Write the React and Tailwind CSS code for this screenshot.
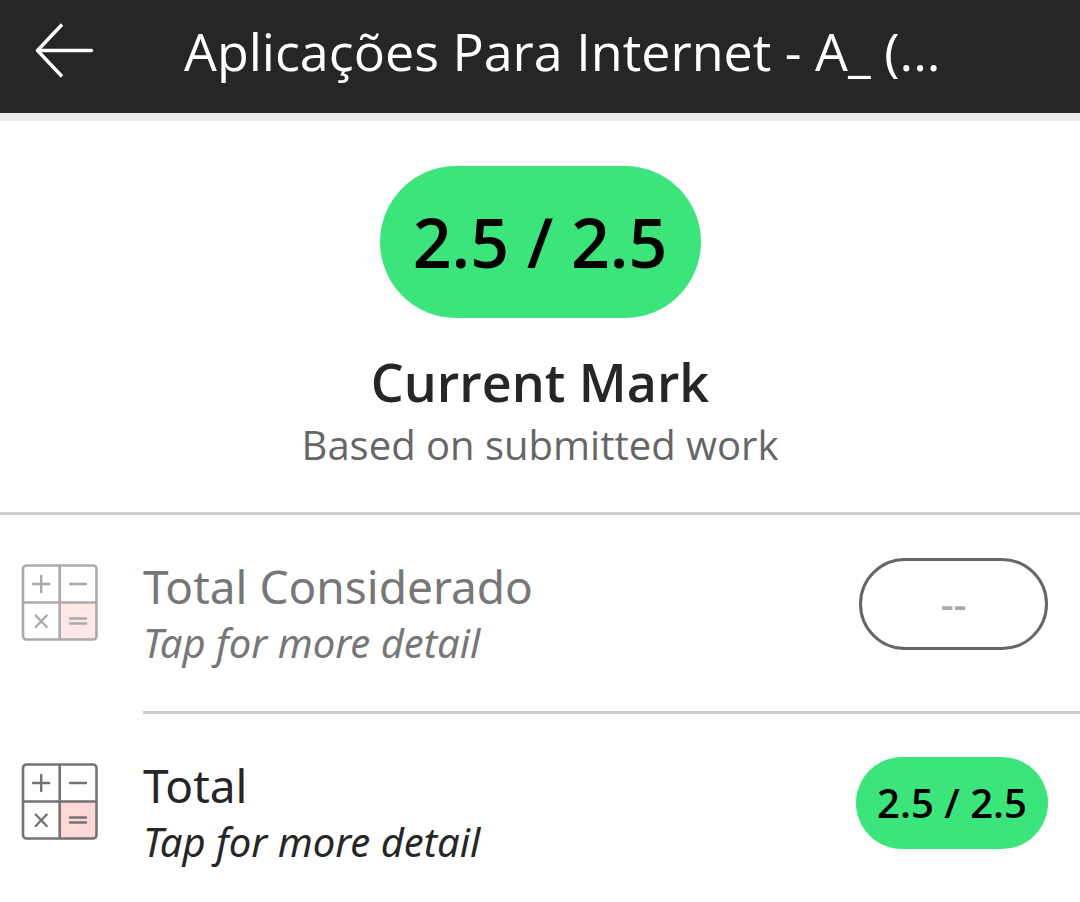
const rows = [
  { name: 'Total Considerado', grade: null },
  { name: 'Total', grade: '2.5 / 2.5' },
];

const BackIcon = () => (
  <svg width="60" height="56" viewBox="0 0 60 56" fill="none" stroke="#fff" strokeWidth="3.4">
    <path d="M27 1.5 2.5 27.5 27 53.5" strokeLinejoin="round" />
    <path d="M3 27.5h53.5" strokeLinecap="round" />
  </svg>
);

const CalculatorIcon = () => (
  <svg width="78" height="78" viewBox="0 0 78 78" fill="none" stroke="#737373" strokeWidth="2.6" aria-hidden="true">
    <path d="M39.5 39.5h37v37h-37z" fill="#ffd8d5" stroke="none" />
    <rect x="3" y="2.5" width="73.5" height="74" rx="3.5" />
    <path d="M39.7 2.5v74M3 39.5h73.5" />
    <path
      d="M13.2 21h16M21.2 13v16M50 21h16M15.7 52.5l11 11.5M26.7 52.5l-11 11.5M50 55.5h16M50 60.5h16"
      strokeWidth="2.4"
      strokeLinecap="round"
    />
  </svg>
);

const GradeRow = ({ name, grade }) => (
  <button type="button" className="flex w-full items-start pl-5 text-left">
    <span className={`mt-12 mr-[45px] shrink-0 ${grade ? '' : 'opacity-60'}`}>
      <CalculatorIcon />
    </span>
    <span className={`flex flex-1 items-start justify-between pt-[43px] pr-8 ${grade ? 'pb-8' : 'border-b-3 border-[#ccc] pb-[39px]'}`}>
      <span className={`flex flex-col font-['Noto_Sans',sans-serif] ${grade ? 'text-[#262626]' : 'text-[#777]'}`}>
        <span className="text-[46px] leading-[56px]">{name}</span>
        <span className="text-[40px] leading-[58px] italic">Tap for more detail</span>
      </span>
      {grade ? (
        <span className="flex h-[92px] w-48 items-center justify-center rounded-full bg-[#3ce57c] text-[40px] font-semibold text-black">{grade}</span>
      ) : (
        <span className="flex h-[92px] w-[189px] items-center justify-center rounded-full border-3 border-[#666] text-[40px] font-semibold text-[#aaa]">--</span>
      )}
    </span>
  </button>
);

export default function App() {
  return (
    <div className="min-h-screen bg-white font-['Open_Sans','Noto_Sans',sans-serif]">
      <header className="flex h-[121px] items-center border-b-8 border-[#ebebeb] bg-[#262626] pr-8 pl-[35px] text-white">
        <button type="button" aria-label="Back" className="mr-[89px] shrink-0 pb-3">
          <BackIcon />
        </button>
        <h1 className="truncate pb-3 text-[52px] leading-[72px]">Aplicações Para Internet - A_ (...</h1>
      </header>

      <section className="flex flex-col items-center border-b-3 border-[#ccc] pt-[45px] pb-10 text-center">
        <div className="flex h-[152px] w-[321px] items-center justify-center rounded-full bg-[#3ce57c] text-[68px] font-semibold text-black">2.5 / 2.5</div>
        <h2 className="mt-7 text-[52px] leading-[72px] font-semibold text-[#262626]">Current Mark</h2>
        <p className="text-[40px] leading-[54px] text-[#666]">Based on submitted work</p>
      </section>

      <main>
        {rows.map((row) => (
          <GradeRow key={row.name} {...row} />
        ))}
      </main>
    </div>
  );
}
